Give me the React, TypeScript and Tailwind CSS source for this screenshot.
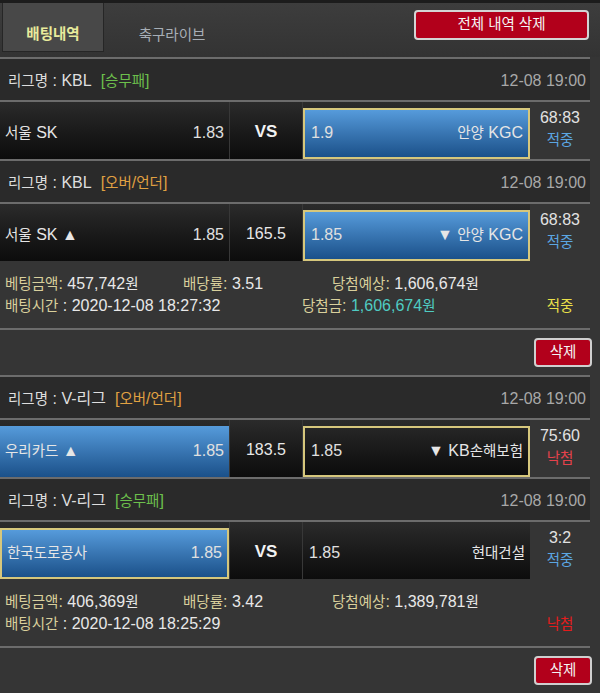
import React from "react";

const K = ({ children }: { children: React.ReactNode }) => (
  <span className="text-[14.5px]">{children}</span>
);

const Line = () => <div className="h-[2px] w-[590px] bg-[#6c6c6c]" />;

type HeaderProps = { league: string; type: "wdl" | "ou"; time: string };
const Header = ({ league, type, time }: HeaderProps) => (
  <div className="flex h-[41px] w-[590px] items-center bg-[#2a2a2a] pl-[8px] pr-[4px] pt-[3px] text-[#dedede]">
    <span>
      <K>리그명</K> : {league}
    </span>
    {type === "wdl" ? (
      <span className="ml-[9px] text-[#6cbf4c]">
        [<K>승무패</K>]
      </span>
    ) : (
      <span className="ml-[9px] text-[#e0a142]">
        [<K>오버</K>/<K>언더</K>]
      </span>
    )}
    <span className="ml-auto text-[#a8a8a8]">{time}</span>
  </div>
);

type Side = "none" | "blue" | "blueSel" | "darkSel";
const sideClass = (s: Side) => {
  if (s === "blue") return "bg-gradient-to-b from-[#569bdb] to-[#1b518a]";
  if (s === "blueSel")
    return "bg-gradient-to-b from-[#569bdb] to-[#1b518a] border-2 border-[#d6c77c]";
  if (s === "darkSel")
    return "bg-gradient-to-b from-[#262626] to-[#0c0c0c] border-2 border-[#d6c77c]";
  return "";
};

type MatchProps = {
  home: React.ReactNode;
  homeOdds: string;
  homeStyle: Side;
  mid: string;
  midBold?: boolean;
  away: React.ReactNode;
  awayOdds: string;
  awayStyle: Side;
  score: string;
  result: "hit" | "miss";
};

const Match = (p: MatchProps) => (
  <div className="flex h-[57px] w-[590px]">
    <div className="flex h-full w-[530px] items-end bg-gradient-to-b from-[#2b2b2b] to-[#0c0c0c]">
      <div
        className={`flex h-[51px] w-[229px] items-center justify-between pb-[2px] pl-[5px] pr-[5px] text-[#e6e6e6] ${sideClass(
          p.homeStyle
        )}`}
      >
        <span>{p.home}</span>
        <span className="text-[#e0e0e0]">{p.homeOdds}</span>
      </div>
      <div className="flex h-full w-[74px] items-center justify-center border-l border-r border-[#383838] pt-[2px]">
        {p.midBold ? (
          <span className="text-[17px] font-bold text-[#f2f2f2]">VS</span>
        ) : (
          <span className="text-[#e8e8e8]">{p.mid}</span>
        )}
      </div>
      <div
        className={`flex h-[51px] w-[227px] items-center justify-between pb-[2px] pl-[6px] pr-[5px] text-[#e6e6e6] ${sideClass(
          p.awayStyle
        )}`}
      >
        <span className="text-[#e0e0e0]">{p.awayOdds}</span>
        <span>{p.away}</span>
      </div>
    </div>
    <div className="flex w-[60px] flex-col items-center justify-center bg-[#353535] pb-[4px] leading-[22px]">
      <span className="text-[#e2e2e2]">{p.score}</span>
      {p.result === "hit" ? (
        <span className="text-[#5ba6e2]">
          <K>적중</K>
        </span>
      ) : (
        <span className="text-[#e5424c]">
          <K>낙첨</K>
        </span>
      )}
    </div>
  </div>
);

type InfoProps = {
  amount: string;
  rate: string;
  expect: string;
  time: string;
  win?: string;
  status: "hit" | "miss";
};

const Info = (p: InfoProps) => (
  <div className="flex h-[67px] w-[590px] bg-[#353535] leading-[22px]">
    <div className="w-[530px] pl-[5px] pt-[12px]">
      <div className="flex">
        <span className="w-[178px]">
          <span className="text-[#d9d09c]">
            <K>베팅금액</K>:
          </span>{" "}
          <span className="text-[#e8e8e8]">
            {p.amount}
            <K>원</K>
          </span>
        </span>
        <span className="w-[149px]">
          <span className="text-[#d9d09c]">
            <K>배당률</K>:
          </span>{" "}
          <span className="text-[#e8e8e8]">{p.rate}</span>
        </span>
        <span>
          <span className="text-[#d9d09c]">
            <K>당첨예상</K>:
          </span>{" "}
          <span className="text-[#e8e8e8]">
            {p.expect}
            <K>원</K>
          </span>
        </span>
      </div>
      <div className="flex">
        <span className="w-[297px]">
          <span className="text-[#d9d09c]">
            <K>배팅시간</K>
          </span>{" "}
          <span className="text-[#e8e8e8]">: {p.time}</span>
        </span>
        {p.win && (
          <span>
            <span className="text-[#d9d09c]">
              <K>당첨금</K>:
            </span>{" "}
            <span className="text-[#4fcbc2]">
              {p.win}
              <K>원</K>
            </span>
          </span>
        )}
      </div>
    </div>
    <div className="w-[60px] pt-[34px] text-center">
      {p.status === "hit" ? (
        <span className="text-[#e9e04a]">
          <K>적중</K>
        </span>
      ) : (
        <span className="text-[#e41c1c]">
          <K>낙첨</K>
        </span>
      )}
    </div>
  </div>
);

const DeleteRow = () => (
  <div className="flex h-[45px] w-full items-center justify-end bg-[#353535] pr-[8px]">
    <button className="flex h-[29px] w-[58px] items-center justify-center rounded-[4px] border-2 border-[#cfcfcf] bg-[#b2001b] text-[#f4f4f4]">
      <K>삭제</K>
    </button>
  </div>
);

export default function App() {
  return (
    <div
      className="min-h-screen w-[600px] overflow-hidden bg-[#353535] text-[16px] leading-normal"
      style={{ fontFamily: '"Liberation Sans", "Noto Sans CJK KR", sans-serif' }}
    >
      {/* top bar */}
      <div className="flex h-[57px] w-full items-start border-t-[3px] border-[#1c1c1c] bg-gradient-to-b from-[#3d3d3d] to-[#333333]">
        <div className="ml-[2px] flex h-[49px] w-[102px] items-center justify-center border-b border-l border-r border-[#262626] bg-[#484848] pt-[16px] font-bold text-[#e8eb9c]">
          <K>배팅내역</K>
        </div>
        <div className="flex h-[49px] w-[136px] items-center justify-center pt-[16px] text-[#a7aeb6]">
          <K>축구라이브</K>
        </div>
        <button className="ml-auto mr-[11px] mt-[7px] flex h-[30px] w-[175px] items-center justify-center rounded-[4px] border-2 border-[#d4d4d4] bg-[#b2001b] text-[#f4f4f4]">
          <K>전체 내역 삭제</K>
        </button>
      </div>
      <Line />

      {/* group 1 */}
      <Header league="KBL" type="wdl" time="12-08 19:00" />
      <Line />
      <Match
        home={
          <>
            <K>서울</K> SK
          </>
        }
        homeOdds="1.83"
        homeStyle="none"
        mid="VS"
        midBold
        away={
          <>
            <K>안양</K> KGC
          </>
        }
        awayOdds="1.9"
        awayStyle="blueSel"
        score="68:83"
        result="hit"
      />
      <Line />
      <Header league="KBL" type="ou" time="12-08 19:00" />
      <Line />
      <Match
        home={
          <>
            <K>서울</K> SK ▲
          </>
        }
        homeOdds="1.85"
        homeStyle="none"
        mid="165.5"
        away={
          <>
            ▼ <K>안양</K> KGC
          </>
        }
        awayOdds="1.85"
        awayStyle="blueSel"
        score="68:83"
        result="hit"
      />
      <Info
        amount="457,742"
        rate="3.51"
        expect="1,606,674"
        time="2020-12-08 18:27:32"
        win="1,606,674"
        status="hit"
      />
      <Line />
      <DeleteRow />
      <Line />

      {/* group 2 */}
      <Header league="V-리그" type="ou" time="12-08 19:00" />
      <Line />
      <Match
        home={
          <>
            <K>우리카드</K> ▲
          </>
        }
        homeOdds="1.85"
        homeStyle="blue"
        mid="183.5"
        away={
          <>
            ▼ KB<K>손해보험</K>
          </>
        }
        awayOdds="1.85"
        awayStyle="darkSel"
        score="75:60"
        result="miss"
      />
      <Line />
      <Header league="V-리그" type="wdl" time="12-08 19:00" />
      <Line />
      <Match
        home={<K>한국도로공사</K>}
        homeOdds="1.85"
        homeStyle="blueSel"
        mid="VS"
        midBold
        away={<K>현대건설</K>}
        awayOdds="1.85"
        awayStyle="none"
        score="3:2"
        result="hit"
      />
      <Info
        amount="406,369"
        rate="3.42"
        expect="1,389,781"
        time="2020-12-08 18:25:29"
        status="miss"
      />
      <Line />
      <DeleteRow />
    </div>
  );
}
